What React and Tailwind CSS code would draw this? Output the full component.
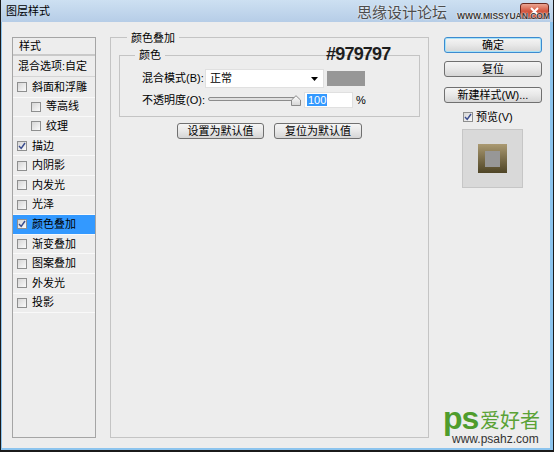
import React from 'react'

// 左侧样式列表
const items = [
  { label: '斜面和浮雕' },
  { label: '等高线', indent: true },
  { label: '纹理', indent: true },
  { label: '描边', checked: true },
  { label: '内阴影' },
  { label: '内发光' },
  { label: '光泽' },
  { label: '颜色叠加', checked: true, active: true },
  { label: '渐变叠加' },
  { label: '图案叠加' },
  { label: '外发光' },
  { label: '投影' }
]

const Check = ({ checked }) => (
  <span className="w-[10px] h-[10px] shrink-0 border border-[#8e8f8f] bg-linear-to-br from-[#d6d6d6] to-[#fafafa] flex items-center justify-center">
    {checked && (
      <svg width="8" height="8" viewBox="0 0 8 8">
        <path d="M1 4 L3.2 6.4 L7 1" stroke="#3a4d8f" strokeWidth="1.5" fill="none" />
      </svg>
    )}
  </span>
)

const Btn = ({ children, className = '', focus }) => (
  <div
    className={`h-[16px] rounded-[3px] border ${focus ? 'border-[#3c8bd0] shadow-[inset_0_0_0_1px_#a8e2f7]' : 'border-[#707070]'} bg-linear-to-b from-[#f5f5f5] via-[#e8e8e8] to-[#d5d5d5] flex items-center justify-center text-[11px] leading-none ${className}`}
  >
    {children}
  </div>
)

export default function App() {
  return (
    <div className="w-[554px] h-[452px] bg-[#1b1b1b] pl-px pr-px pb-[2px] flex flex-col relative overflow-hidden font-['Liberation_Sans','Noto_Sans_CJK_SC',sans-serif] text-black">
      {/* 标题栏 */}
      <div className="h-[22px] shrink-0 bg-linear-to-b from-[#cde0f2] to-[#b6cde7] flex items-center pl-[5px]">
        <span className="text-[11px] leading-none">图层样式</span>
      </div>

      <div className="absolute left-[520px] top-[3px] w-[29px] h-[16px] rounded-[3px] border border-[#6b2a20] bg-linear-to-b from-[#eaa593] via-[#d3563f] to-[#bf3923] flex items-center justify-center">
        <svg width="11" height="9" viewBox="0 0 11 9">
          <path d="M2 1 L9 8 M9 1 L2 8" stroke="#fff" strokeWidth="2" />
        </svg>
      </div>
      <span className="absolute left-[357px] top-[5px] text-[15px] leading-[16px] text-[#4d4d4d] [text-shadow:0_0_2px_#fff]">思缘设计论坛</span>
      <span className="absolute left-[457px] top-[12px] text-[8.5px] font-bold leading-none text-[#3a3a3a] [text-shadow:0_0_1px_#fff,0_0_2px_#fff]">WWW.MISSYUAN.COM</span>

      {/* 主体 */}
      <div className="flex-1 bg-[#ededed] border-l border-r-[3px] border-b-2 border-[#8cc4ee] flex items-start pl-[10px] pt-[15px]">
        {/* 左侧列表 */}
        <div className="w-[84px] h-[401px] border border-[#a5a5a5] flex flex-col text-[11px]">
          <div className="h-[18px] border-b-2 border-[#c9c9c9] pl-[6px] leading-[16px]">样式</div>
          <div className="h-[21px] border-b border-[#d4d4d4] pl-[5px] flex items-center">混合选项:自定</div>
          <div className="pt-px">
            {items.map(item => (
              <div
                key={item.label}
                className={`h-[19.6px] flex items-center gap-[5px] border-b border-[#f9f9f9] ${item.indent ? 'pl-[18px]' : 'pl-[4px]'} ${item.active ? 'bg-[#3399ff]' : ''}`}
              >
                <Check checked={item.checked} />
                <span className="leading-none">{item.label}</span>
              </div>
            ))}
          </div>
        </div>

        {/* 颜色叠加 */}
        <div className="ml-[14px] w-[319px] h-[401px] border border-[#c4c4c4] relative text-[11px]">
          <div className="-mt-[7px] ml-[16px] px-[4px] w-fit bg-[#ededed] leading-[14px]">颜色叠加</div>

          <div className="mt-[10px] ml-[8px] w-[301px] border border-[#c4c4c4] pb-[8px]">
            <div className="-mt-[8px] ml-[15px] px-[4px] w-fit bg-[#ededed] leading-[14px]">颜色</div>

            <div className="mt-[7px] pl-[22px] flex items-center h-[19px]">
              <span className="w-[63px] leading-none">混合模式(B):</span>
              <div className="w-[119px] h-[19px] bg-white border border-[#e0e0e0] flex items-center justify-between pl-[4px] pr-[5px]">
                <span className="leading-none">正常</span>
                <svg width="7" height="4" viewBox="0 0 7 4">
                  <path d="M0 0 H7 L3.5 4 Z" fill="#000" />
                </svg>
              </div>
              <div className="ml-[3px] w-[38px] h-[15px] bg-[#979797]"></div>
            </div>

            <div className="mt-[4px] pl-[22px] flex items-center h-[16px]">
              <span className="w-[66px] leading-none">不透明度(O):</span>
              <div className="relative w-[93px] h-[16px]">
                <div className="absolute left-0 top-[5px] w-[89px] h-[4px] rounded-[2px] border border-[#8c8c8c] bg-[#e0e0e0]"></div>
                <svg className="absolute left-[83px] top-[3px]" width="10" height="11" viewBox="0 0 10 11">
                  <defs>
                    <linearGradient id="th" x1="0" y1="0" x2="0" y2="1">
                      <stop offset="0" stopColor="#ffffff" />
                      <stop offset="1" stopColor="#d4d4d4" />
                    </linearGradient>
                  </defs>
                  <path d="M0.5 10.5 V5 L5 0.7 L9.5 5 V10.5 Z" fill="url(#th)" stroke="#8a8a8a" />
                </svg>
              </div>
              <div className="ml-[3px] w-[49px] h-[16px] bg-white border border-[#e0e0e0] flex items-center pl-[2px]">
                <span className="bg-[#3399ff] text-white px-px leading-[12px]">100</span>
              </div>
              <span className="ml-[3px] leading-none">%</span>
            </div>
          </div>

          <div className="mt-[6px] flex justify-center gap-[10px]">
            <Btn className="w-[87px]">设置为默认值</Btn>
            <Btn className="w-[88px]">复位为默认值</Btn>
          </div>

          <span className="absolute left-[215px] top-[7px] text-[18px] font-bold leading-none tracking-[-0.8px] text-[#1e1e1e]">#979797</span>
        </div>

        {/* 右侧按钮 */}
        <div className="ml-[15px] w-[98px] flex flex-col text-[11px]">
          <Btn focus>确定</Btn>
          <Btn className="mt-[8px]">复位</Btn>
          <Btn className="mt-[10px]">新建样式(W)...</Btn>
          <div className="mt-[7px] pl-[19px] flex items-center gap-[3px] h-[14px]">
            <Check checked />
            <span className="leading-none">预览(V)</span>
          </div>
          <div className="mt-[5px] ml-[18px] w-[61px] h-[59px] bg-[#d9d9d9] border border-[#c6c6c6] flex items-center justify-center">
            <div className="w-[29px] h-[29px] bg-linear-to-b from-[#ab9a72] to-[#4f4526] flex items-center justify-center">
              <div className="w-[15px] h-[16px] bg-[#979797]"></div>
            </div>
          </div>
        </div>
      </div>

      {/* 水印 */}
      <span className="absolute left-[443px] top-[405px] text-[32px] font-black leading-[26px] tracking-[-1px] text-[#4f9c2c]">ps</span>
      <span className="absolute left-[480px] top-[411px] text-[20px] leading-none text-[#5aa236]">爱好者</span>
      <span className="absolute left-[452px] top-[433px] text-[12px] leading-none text-[#333]">www.psahz.com</span>
    </div>
  )
}
